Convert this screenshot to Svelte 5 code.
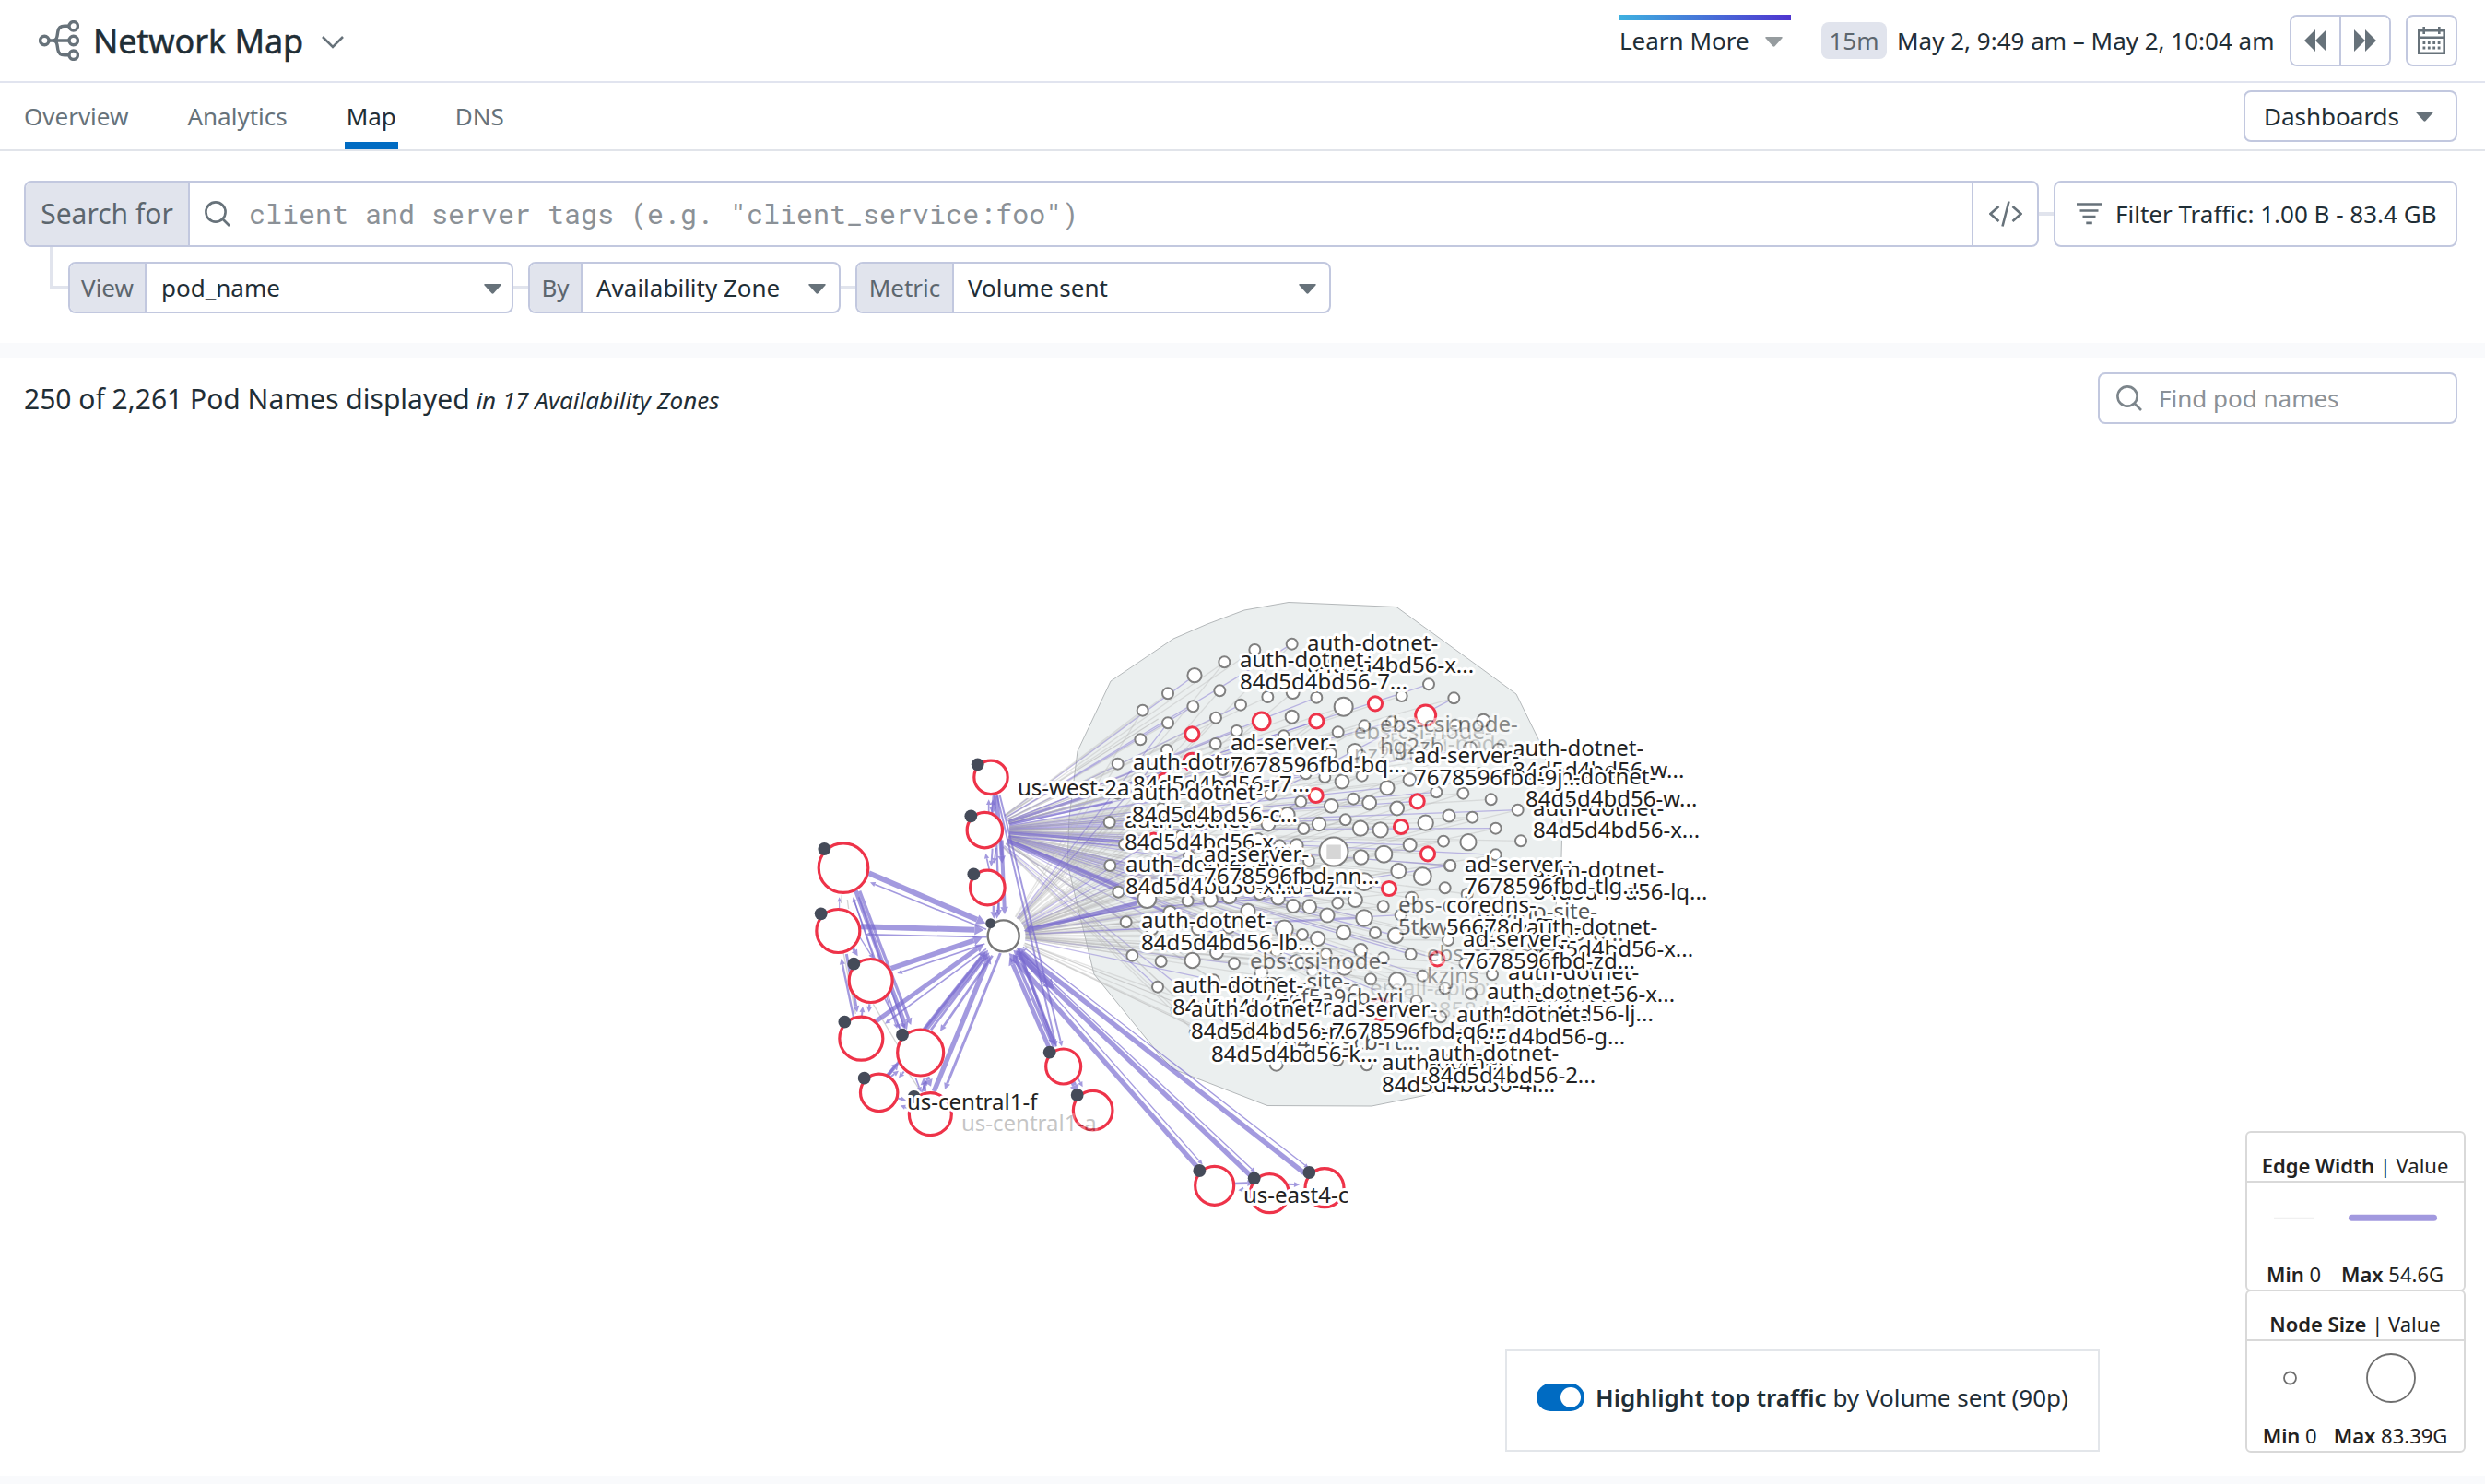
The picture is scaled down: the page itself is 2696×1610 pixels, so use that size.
<script>
  const INK = '#796bd0';
  const RED = '#ee3349';
  const GREY = '#808080';

  // Each tile stores its items in thirds of a pixel, relative to its own origin.
  const place = (ox, oy, list) =>
    list.map(([x, y, r = 6, tone = 0]) => ({ x: ox + x / 3, y: oy + y / 3, r, tone }));

  const hull =
    '1205,739 1273,693 1310,677 1350,662 1398,653.500 1515,658.500 1600,720 1645,753 1670,804 1690,862 1695,890 1694,930 1688,983 1672,1080 1610,1168 1543,1189 1488,1200 1375,1199.500 1273,1160 1260,1147 1187,1057 1158,937 1160,887 1169,815';

  const pods = [
    ...place(1150, 640, [
      [755, 176], [634, 195], [535, 235], [438, 278, 7.6], [520, 328], [351, 337], [269, 392], [433, 379],
      [351, 433], [262, 487], [188, 566], [588, 374], [507, 416], [676, 348], [758, 333, 7], [835, 350],
      [923, 380, 10], [656, 427, 9.4, 1], [835, 427, 7.6, 1], [1026, 370, 7.6, 1], [430, 469, 7.6, 1],
      [755, 413, 7], [575, 459], [506, 501], [348, 521], [905, 463], [728, 475], [1112, 345], [991, 442],
      [960, 525, 8], [880, 533, 6.5], [430, 560, 9.4, 1], [340, 620, 7.6, 1], [800, 598], [862, 609],
      [918, 624, 7.4], [983, 605], [1065, 644, 7.6], [1138, 618, 6.8], [833, 669, 7.6, 1], [784, 689],
      [883, 703, 7.4], [955, 680], [1007, 693, 7.4], [1097, 711, 7.4], [1163, 688, 7.6, 1], [843, 762, 7.2],
      [793, 777], [929, 748], [978, 776, 8.2], [1043, 781, 8.2], [1110, 771, 7.6, 1], [740, 732, 8],
      [678, 762, 7.4], [161, 756], [188, 662], [305, 815, 7.6, 1], [685, 665], [980, 870, 7.8],
      [1054, 860, 9], [1139, 830, 7], [770, 832, 7], [715, 832], [810, 882], [163, 897], [530, 585],
      [210, 828], [330, 712], [420, 865], [395, 800], [645, 810]
    ]),
    ...place(1500, 640, [
      [150, 307], [232, 352], [140, 408, 11, 1], [328, 425, 7], [175, 658], [262, 662], [353, 682],
      [440, 716], [216, 735, 6.6], [292, 740], [140, 758, 8.2], [368, 776], [450, 817], [198, 818],
      [279, 821, 8.6], [368, 862], [147, 859, 7.6, 1], [219, 897], [237, 440], [285, 515, 7], [378, 518],
      [315, 598], [30, 430]
    ]),
    ...place(1150, 920, [
      [190, 143], [283, 165, 10], [358, 210, 7], [215, 241], [235, 350], [329, 369], [431, 366, 8.2],
      [318, 452], [380, 528], [440, 600], [567, 376], [510, 340, 7], [416, 172], [490, 168, 7.6],
      [551, 158, 7.6], [710, 163, 7.2], [759, 189, 7], [812, 191, 7.4], [612, 205, 7.6], [730, 264, 9.4],
      [789, 282], [839, 295, 7.6], [870, 219, 7.6], [904, 179], [961, 169, 7.6], [923, 275, 7.6],
      [990, 228, 8.8], [1026, 276], [1052, 190], [1092, 285, 8.2], [979, 333, 7], [866, 345], [1052, 358],
      [1142, 346], [1097, 432, 8.8], [1011, 427], [960, 464], [1071, 132, 7.6, 1], [1102, 75, 8],
      [1180, 92, 9.4], [990, 110, 9.4], [650, 150], [1109, 218], [1145, 163, 6.6], [770, 372, 8],
      [655, 405, 7], [925, 388, 8.4], [822, 400], [704, 704, 7], [903, 691], [998, 706], [1042, 525, 11.5, 1],
      [1180, 416], [1160, 498], [300, 265], [450, 262, 7], [550, 260], [704, 335], [500, 430]
    ]),
    ...place(1500, 920, [
      [220, 57], [203, 130], [275, 150], [213, 300], [178, 361, 7.6, 1], [203, 457], [288, 474],
      [357, 412], [189, 550], [268, 375], [140, 275]
    ])
  ];

  const zones = [
    ...place(860, 780, [
      [645, 190, 18.2, 1], [625, 362, 19.2, 1], [634, 549, 18.8, 1], [165, 485, 26.8, 1], [148, 690, 23.5, 1],
      [254, 852, 23.5, 1], [223, 1040, 23.5, 1], [416, 1086, 25, 1], [281, 1216, 20.2, 1],
      [448, 1286, 23, 1], [881, 1131, 19, 1], [977, 1274, 21.3, 1], [686, 706, 17]
    ]),
    ...place(1260, 860, [[173, 1279, 21, 1], [352, 1304, 21, 1], [531, 1286, 21, 1]])
  ];

  const badges = [
    ...place(860, 780, [
      [602, 148, 6.9], [580, 316, 6.9], [589, 505, 6.9], [103, 423, 6.9], [92, 634, 6.9], [199, 797, 6.9],
      [169, 986, 6.9], [357, 1028, 6.9], [233, 1169, 6.9], [395, 1230, 6.9], [836, 1085, 6.9],
      [926, 1224, 6.9], [644, 665, 5.4]
    ]),
    ...place(1260, 860, [[124, 1230, 6.9], [302, 1255, 6.9], [481, 1236, 6.9]])
  ];

  // Straight arrows between zones: start, end, width.
  const arrows = [
    [248, 502, 628, 665, 18], [630, 685, 252, 532, 5],
    [222, 676, 622, 687, 18], [632, 710, 236, 701, 5],
    [320, 812, 617, 712, 17], [625, 732, 340, 828, 5],
    [270, 985, 622, 732, 15], [630, 748, 300, 992, 5],
    [430, 1012, 636, 752, 18], [650, 770, 480, 1016, 8], [450, 1012, 640, 760, 8],
    [310, 1160, 628, 758, 8],
    [460, 1212, 642, 768, 16], [676, 762, 495, 1206, 9],
    [655, 608, 655, 650, 10], [680, 395, 690, 636, 12], [658, 250, 672, 640, 7], [670, 600, 664, 650, 6],
    [640, 492, 628, 437, 5], [650, 422, 646, 480, 6], [638, 305, 638, 262, 5], [655, 248, 650, 310, 10],
    [664, 250, 682, 470, 12], [648, 305, 652, 262, 5], [662, 420, 655, 470, 5],
    [665, 248, 858, 1066, 6], [674, 248, 876, 1066, 6],
    [838, 1078, 706, 775, 14], [850, 1068, 718, 765, 10], [735, 748, 856, 1062, 7], [858, 1066, 728, 750, 6],
    [745, 775, 848, 1060, 8],
    [912, 1182, 928, 1218, 16], [926, 1165, 944, 1198, 5],
    [1320, 1462, 704, 762, 16], [735, 770, 1334, 1450, 4],
    [1490, 1486, 718, 752, 16], [745, 762, 1506, 1476, 4],
    [1665, 1478, 728, 745, 16], [750, 742, 1680, 1462, 4],
    [740, 760, 850, 880, 20],
    [205, 558, 372, 1012, 14], [218, 560, 385, 996, 10], [350, 1012, 196, 580, 5], [200, 590, 340, 1008, 4],
    [215, 580, 365, 1010, 5], [198, 970, 158, 780, 7], [175, 765, 210, 955, 9], [195, 745, 212, 772, 9],
    [152, 618, 152, 580, 3], [250, 928, 248, 955, 7], [225, 966, 228, 936, 6], [212, 700, 262, 780, 4],
    [300, 910, 350, 1010, 5], [305, 1165, 345, 1118, 12], [312, 1170, 345, 1145, 6], [362, 1148, 345, 1168, 6],
    [430, 1212, 426, 1168, 11], [438, 1166, 450, 1196, 14], [400, 1168, 418, 1215, 5], [420, 1214, 436, 1175, 6],
    [340, 1234, 370, 1242, 6], [376, 1268, 350, 1258, 5],
    [1438, 1512, 1500, 1510, 8], [1480, 1530, 1450, 1534, 6], [1610, 1514, 1650, 1516, 6],
    [1120, 600, 752, 690, 14], [1150, 608, 760, 682, 5]
  ].map(([x1, y1, x2, y2, w]) => {
    const len = Math.hypot(x2 - x1, y2 - y1);
    const ux = (x2 - x1) / len;
    const uy = (y2 - y1) / len;
    const head = Math.min(12 + w, len * 0.7);
    const half = 4.5 + w * 0.7;
    const bx = x2 - ux * head;
    const by = y2 - uy * head;
    return {
      x1, y1, w, x2: bx, y2: by,
      tip: `${x2},${y2} ${bx - uy * half},${by + ux * half} ${bx + uy * half},${by - ux * half}`
    };
  });

  const heavy = [
    [700, 395, 1060, 545, 12], [702, 402, 1232, 636, 8], [706, 372, 1110, 402, 9], [706, 342, 1040, 270, 7],
    [704, 382, 1260, 430, 5], [704, 332, 1000, 235, 4], [1750, 570, 1200, 610, 4], [1680, 820, 1230, 640, 4]
  ];
  const faint = [
    [160, 572, 158, 600], [178, 588, 182, 618], [262, 928, 342, 1062], [368, 1140, 410, 1202],
    [690, 315, 1190, 0], [700, 392, 1240, 900], [730, 650, 930, 420], [756, 730, 1240, 920], [756, 740, 1300, 1000],
    [165, 760, 205, 960]
  ];

  const fan = (cx, cy, gap, keep, purple) =>
    pods.filter((_, i) => keep(i)).map((p, i) => {
      const d = Math.hypot(p.x - cx, p.y - cy);
      return {
        x1: cx + ((p.x - cx) / d) * gap,
        y1: cy + ((p.y - cy) / d) * gap,
        x2: p.x, y2: p.y, purple: purple(i)
      };
    });
  const traffic = [
    ...fan(1068.5, 900.6, 27, (i) => i % 5 !== 4, (i) => i % 3 === 0),
    ...fan(1088.7, 1015, 24, (i) => i % 2 === 0, (i) => i % 8 === 4)
  ];

  const AUTH = 'auth-dotnet-';
  const AD = 'ad-server-';
  const A = '84d5d4bd56-';
  const B = '7678596fbd-';
  // x, first baseline, first line, second line, opacity
  const labels = [
    [1419, 706, AUTH, A + 'x...'], [1346, 724, AUTH, A + '7...'],
    [1495, 815, 'ebs-csi-node-', '', 0.22], [1470, 802, 'ebs-csi-node-', 'pz2wt', 0.32],
    [1498, 794, 'ebs-csi-node-', 'hg2zb', 0.5],
    [1282, 946, AD, B + 'dz...'], [1222, 946, AUTH, A + 'x...'], [1221, 898, AUTH, A + 'x...'],
    [1307, 935, AD, B + 'nn...'], [1230, 835, AUTH, A + 'r7...'], [1229, 868, AUTH, A + 'c...'],
    [1336, 814, AD, B + 'bq...'],
    [1664, 885, AUTH, A + 'x...'], [1642, 820, AUTH, A + 'w...'], [1656, 851, AUTH, A + 'w...'],
    [1535, 828, AD, B + '9j...'],
    [1664, 952, AUTH, A + 'lq...'], [1590, 946, AD, B + 'tlg...'],
    [1603, 997, 'promo-site-', '7d9c8b6f5-g...', 0.75], [1518, 990, 'ebs-csi-node-', '5tkwz', 0.65],
    [1570, 990, 'coredns-', '56678dcf76-...'], [1657, 1014, AUTH, A + 'x...'],
    [1487, 1080, 'email-api-py-', '6f7c93858d-...', 0.18], [1549, 1043, 'ebs-csi-node-', 'kzjns', 0.42],
    [1637, 1063, AUTH, A + 'x...'], [1588, 1027, AD, B + 'zd...'], [1614, 1084, AUTH, A + 'lj...'],
    [1581, 1109, AUTH, A + 'g...'],
    [1239, 1007, AUTH, A + 'lb...'], [1335, 1073, 'promo-site-', '', 0.75],
    [1357, 1051, 'ebs-csi-node-', '', 0.6], [1370, 1090, '7d4f5a9cb-vrj', '', 0.75],
    [1380, 1139, '7d4f5c9cb-rt...', '', 0.75],
    [1273, 1077, AUTH, A + '7r...'], [1315, 1128, AUTH, A + 'k...'], [1293, 1103, AUTH, A + 'r...'],
    [1446, 1103, AD, B + 'q6...'], [1500, 1161, AUTH, A + '4r...'], [1550, 1151, AUTH, A + '2...'],
    [1105, 862.5, 'us-west-2a', ''], [1044, 1227, 'us-central1-a', '', 0.26],
    [985, 1203.5, 'us-central1-f', ''], [1350, 1304.5, 'us-east4-c', '']
  ].map(([x, y, one, two, alpha = 1]) => ({ x: x - 1, y: y + 0.3, one, two, alpha }));

  const tabs = ['Overview', 'Analytics', 'Map', 'DNS'];
  const selects = [
    { tag: 'View', value: 'pod_name', cls: 'view' },
    { tag: 'By', value: 'Availability Zone', cls: 'by' },
    { tag: 'Metric', value: 'Volume sent', cls: 'metric' }
  ];
</script>

{#snippet caret()}
  <svg class="caret" width="19" height="11" viewBox="0 0 19 11"><path d="M1 0h17q1.200.4.400 1.400L10.500 10.200q-1 .9-2 0L.6 1.400Q-.2.400 1 0z" fill="currentColor" /></svg>
{/snippet}

{#snippet glass()}
  <svg class="glass" width="28" height="28" viewBox="0 0 28 28" fill="none" stroke="currentColor" stroke-width="2.600"><circle cx="12" cy="12" r="10.600" /><path d="M19.500 19.500l7.500 7.500" /></svg>
{/snippet}

<div class="page">
  <header class="top">
    <svg class="logo" width="44" height="44" viewBox="0 0 44 44" fill="none" stroke="currentColor" stroke-width="3.400">
      <circle cx="6.300" cy="22" r="4.700" /><circle cx="37.700" cy="6.300" r="4.700" />
      <circle cx="37.700" cy="22" r="4.700" /><circle cx="37.700" cy="37.700" r="4.700" />
      <path d="M11 22H33M33 6.300H28c-4 0-6.600 2-7.200 6l-.8 5c-.5 3-1.500 4.700-4.500 4.700c3 0 4 1.700 4.500 4.700l.8 5c.6 4 3.200 6 7.200 6H33" />
    </svg>
    <h1>Network Map</h1>
    <svg class="chev" width="24" height="14" viewBox="0 0 24 14" fill="none" stroke="currentColor" stroke-width="2.600"><path d="M1 1l11 11L23 1" /></svg>
    <div class="learn"><span>Learn More</span>{@render caret()}</div>
    <span class="pill">15m</span>
    <span class="range">May 2, 9:49 am – May 2, 10:04 am</span>
    <div class="pair">
      <button aria-label="Back"><svg width="24" height="24" viewBox="0 0 24 24" fill="currentColor"><path d="M12 0v24L0 12zM24 0v24L12 12z" /></svg></button>
      <button aria-label="Forward"><svg width="24" height="24" viewBox="0 0 24 24" fill="currentColor"><path d="M0 0v24l12-12zM12 0v24l12-12z" /></svg></button>
    </div>
    <button class="cal" aria-label="Calendar">
      <svg width="32" height="32" viewBox="0 0 32 32" fill="none" stroke="currentColor" stroke-width="2.600">
        <path d="M2.300 5.300h27.400v24.400H2.300zM2.300 12.700h27.400M7.700 1v8M24.300 1v8" />
        <path d="M6.500 18.500h19M6.500 24h19" stroke-width="2.800" stroke-dasharray="2.800 2.600" />
      </svg>
    </button>
  </header>

  <nav class="tabs">
    {#each tabs as t}<a href="#{t}" class:active={t === 'Map'}>{t}</a>{/each}
    <button class="dash">Dashboards {@render caret()}</button>
  </nav>

  <section class="query">
    <div class="row">
      <div class="search">
        <span class="tag big">Search for</span>
        <div class="field">{@render glass()}<span class="mono">client and server tags (e.g. "client_service:foo")</span></div>
        <div class="code"><svg width="36" height="28" viewBox="0 0 36 28" fill="none" stroke="currentColor" stroke-width="2.600"><path d="M10.500 6l-9 8 9 8M21.500.5l-7 27M25.500 6l9 8-9 8" /></svg></div>
      </div>
      <i class="link"></i>
      <div class="filter">
        <svg width="27" height="24" viewBox="0 0 27 24" stroke="currentColor" stroke-width="2.700"><path d="M0 1.500h27M3.500 8.500h20M6.500 15h14M10.300 21.800h6.500" /></svg>
        <span>Filter Traffic: 1.00 B - 83.4 GB</span>
      </div>
    </div>
    <div class="sub">
      <i class="elbow"></i>
      {#each selects as s, i}
        {#if i > 0}<i class="link"></i>{/if}
        <div class="select {s.cls}"><span class="tag">{s.tag}</span><span class="val">{s.value}</span>{@render caret()}</div>
      {/each}
    </div>
  </section>

  <section class="map">
    <div class="head">
      <p>250 of 2,261 Pod Names displayed <em>in 17 Availability Zones</em></p>
      <div class="find">{@render glass()}<span>Find pod names</span></div>
    </div>

    <svg class="canvas" width="2696" height="1213" viewBox="0 388 2696 1213">
      <polygon points={hull} fill="#ebefef" stroke="#b4b8ba" stroke-width="1" />
      {#each traffic as l}
        <line x1={l.x1} y1={l.y1} x2={l.x2} y2={l.y2} stroke={l.purple ? INK : '#b4b4b4'} stroke-opacity={l.purple ? 0.45 : 0.36} stroke-width="1.300" />
      {/each}
      <g transform="translate(860 780) scale(.33333)">
        {#each faint as [x1, y1, x2, y2]}
          <line {x1} {y1} {x2} {y2} stroke="#b8b8b8" stroke-opacity=".6" stroke-width="4" />
        {/each}
        {#each heavy as [x1, y1, x2, y2, w]}
          <line {x1} {y1} {x2} {y2} stroke={INK} stroke-opacity=".65" stroke-width={w} />
        {/each}
        {#each arrows as a}
          <g opacity=".68">
            <line x1={a.x1} y1={a.y1} x2={a.x2} y2={a.y2} stroke={INK} stroke-width={a.w} />
            <polygon points={a.tip} fill={INK} />
          </g>
        {/each}
      </g>
      {#each pods as p}
        <circle cx={p.x} cy={p.y} r={p.r} fill="#fff" stroke={p.tone ? RED : GREY} stroke-width={p.tone ? 3 : 2} />
      {/each}
      <circle cx="1447" cy="924" r="15.500" fill="#fff" stroke={GREY} stroke-width="2" />
      <rect x="1439.300" y="916.500" width="15.500" height="15.500" fill="#d6d6d6" />
      {#each zones as z}
        <circle cx={z.x} cy={z.y} r={z.r} fill="#fff" stroke={z.tone ? RED : '#777'} stroke-width={z.tone ? 3.2 : 2.4} />
      {/each}
      {#each badges as b}<circle cx={b.x} cy={b.y} r={b.r} fill="#454b59" />{/each}
      {#each labels as l}
        <text class="label" opacity={l.alpha}><tspan x={l.x} y={l.y}>{l.one}</tspan><tspan x={l.x} y={l.y + 24}>{l.two}</tspan></text>
      {/each}
    </svg>

    <div class="toggle-card">
      <span class="switch"></span>
      <span><b>Highlight top traffic</b> by Volume sent (90p)</span>
    </div>

    <div class="legend">
      <div class="block edge">
        <h4><b>Edge Width</b> | Value</h4>
        <svg width="236" height="88" viewBox="2438 1284 236 88"><path d="M2467 1322.500h43" stroke="#f0f0f0" stroke-width="1.500" /><path d="M2551.500 1322.300h89" stroke="#a299df" stroke-width="7" stroke-linecap="round" /></svg>
        <p><span><b>Min</b> 0</span><span><b>Max</b> 54.6G</span></p>
      </div>
      <div class="block node">
        <h4><b>Node Size</b> | Value</h4>
        <svg width="236" height="88" viewBox="2438 1456 236 88" fill="none" stroke="#6e6e6e" stroke-width="1.800"><circle cx="2484.500" cy="1496" r="6.500" /><circle cx="2594" cy="1496" r="26" /></svg>
        <p><span><b>Min</b> 0</span><span><b>Max</b> 83.39G</span></p>
      </div>
    </div>
  </section>
</div>

<style>
  :global(body) { background: #fff; }
  .page, .page * { box-sizing: border-box; }
  .page {
    width: 2696px; height: 1610px; overflow: hidden; display: flex; flex-direction: column;
    font: 26px 'Noto Sans', 'Open Sans', sans-serif; color: #1f2e36; background: #f9fafc;
  }
  svg { display: block; flex: none; }
  button { font: inherit; color: inherit; background: #fff; padding: 0; margin: 0; }
  .caret, .glass, .logo, .chev { color: #67727a; }
  .top { height: 90px; border-bottom: 2px solid #e1e4ef; background: #fff; display: flex; align-items: center; padding: 0 30px 0 42px; }
  h1 { margin: 0 0 0 15px; font-size: 36px; font-weight: 400; width: 233px; white-space: nowrap; -webkit-text-stroke: .5px currentColor; letter-spacing: -.1px; }
  .chev { margin-left: 15px; margin-top: 3px; }
  .learn { margin-left: auto; position: relative; width: 187px; height: 88px; display: flex; align-items: center; justify-content: space-between; padding: 0 9px 0 1px; white-space: nowrap; }
  .learn::before { content: ''; position: absolute; left: 0; top: 16px; width: 187px; height: 6px; background: linear-gradient(90deg, #3eb1e0, #4f35d0); }
  .learn .caret { color: #969c9f; margin-top: 2px; }
  .pill { margin-left: 33px; width: 71px; height: 40px; border-radius: 8px; background: #e1e4ed; color: #5c666e; display: flex; align-items: center; justify-content: center; }
  .range { margin-left: 11px; width: 426px; white-space: nowrap; }
  .pair { width: 110px; height: 56px; border: 2px solid #c2c8df; border-radius: 8px; display: flex; overflow: hidden; }
  .pair button { flex: 1; border: 0; display: grid; place-items: center; color: #67727a; }
  .pair button + button { border-left: 2px solid #c2c8df; }
  .cal { margin-left: 16px; width: 56px; height: 56px; border: 2px solid #c2c8df; border-radius: 8px; display: grid; place-items: center; color: #67727a; }
  .tabs { height: 74px; border-bottom: 2px solid #e1e4ea; background: #fff; display: flex; align-items: center; padding: 0 30px 0 24px; }
  .tabs a { height: 72px; display: flex; align-items: center; color: #66727a; text-decoration: none; padding: 0 2px; margin-right: 60px; border-bottom: 8px solid transparent; border-top: 8px solid transparent; }
  .tabs a.active { color: #1f2e36; border-bottom-color: #006bc2; }
  .dash { margin-left: auto; width: 232px; height: 56px; border: 2px solid #c2c8df; border-radius: 8px; display: flex; align-items: center; justify-content: space-between; padding: 0 24px 0 20px; }
  .dash .caret { margin-top: 1px; }
  .query { height: 208px; padding: 32px 30px 0 26px; background: #fff; }
  .row { display: flex; align-items: center; height: 72px; }
  .search { flex: 1; height: 72px; border: 2px solid #c2c8df; border-radius: 8px; display: flex; overflow: hidden; }
  .tag { background: #e1e4ed; color: #5c666e; border-right: 2px solid #c2c8df; display: flex; align-items: center; justify-content: center; }
  .tag.big { width: 178px; font-size: 30px; padding-bottom: 1px; }
  .field { flex: 1; display: flex; align-items: center; gap: 20px; padding-left: 16px; }
  .mono { font: 30px 'Roboto Mono', 'Liberation Mono', monospace; color: #8b9197; white-space: pre; padding-bottom: 1px; }
  .code { width: 71px; border-left: 2px solid #c2c8df; display: grid; place-items: center; color: #67727a; }
  .link { width: 16px; height: 4px; background: #e1e4ed; }
  .filter { width: 438px; height: 72px; border: 2px solid #c2c8df; border-radius: 8px; display: flex; align-items: center; gap: 15px; padding-left: 23px; white-space: nowrap; }
  .filter svg { color: #67727a; }
  .sub { display: flex; align-items: center; margin-top: 16px; height: 56px; }
  .elbow { width: 20px; height: 46px; margin: -16px 0 0 28px; align-self: flex-start; border: solid #e1e4ed; border-width: 0 0 4px 4px; }
  .select { height: 56px; border: 2px solid #c2c8df; border-radius: 8px; display: flex; align-items: stretch; overflow: hidden; }
  .view { width: 483px; } .by { width: 339px; } .metric { width: 516px; }
  .view .tag { width: 83px; } .by .tag { width: 57px; } .metric .tag { width: 105px; }
  .val { flex: 1; padding-left: 16px; display: flex; align-items: center; white-space: nowrap; }
  .by .val { padding-left: 15px; }
  .metric .val { padding-left: 15px; }
  .select .caret { align-self: center; margin-right: 11px; margin-top: 2px; }
  .by .caret { margin-right: 14px; }
  .metric .caret { margin-right: 14px; }
  .map { position: relative; margin-top: 16px; height: 1213px; background: #fff; }
  .head { display: flex; align-items: center; justify-content: space-between; padding: 16px 30px 0 26px; height: 72px; position: relative; z-index: 1; }
  .head p { margin: 0; font-size: 30px; white-space: nowrap; }
  .head em { font-size: 26px; margin-left: -1px; }
  .find { width: 390px; height: 56px; border: 2px solid #c2c8df; border-radius: 8px; display: flex; align-items: center; gap: 18px; padding-left: 18px; color: #8b9197; }
  .find .glass { color: #7c858b; }
  .canvas { position: absolute; left: 0; top: 0; }
  .label { font: 24px 'Noto Sans', sans-serif; fill: #222; stroke: #fff; stroke-width: 6px; stroke-linejoin: round; paint-order: stroke; }
  .toggle-card { position: absolute; left: 1633px; top: 1076px; width: 645px; height: 111px; border: 2px solid #e3e6ea; background: #fff; display: flex; align-items: center; padding: 0 0 7px 32px; gap: 12px; white-space: nowrap; }
  .toggle-card b { font-weight: 600; }
  .switch { width: 52px; height: 30px; border-radius: 15px; background: #006bc2; display: flex; justify-content: flex-end; align-items: center; padding-right: 4px; }
  .switch::after { content: ''; width: 22px; height: 22px; border-radius: 50%; background: #fff; }
  .legend { position: absolute; left: 2436px; top: 839px; width: 239px; font-size: 22px; color: #222; }
  .block { border: 2px solid #d9d9d9; border-radius: 6px; background: #fff; }
  .edge { height: 174px; } .node { height: 177px; margin-top: -2px; }
  .block h4 { margin: 0; height: 54px; border-bottom: 2px solid #d9d9d9; font-weight: 400; font-size: 22px; line-height: 30px; padding: 20px 1px 0 0; text-align: center; white-space: nowrap; }
  .block b { font-weight: 600; }
  .block p { margin: -3px 0 0; padding-right: 1px; display: flex; justify-content: center; gap: 22px; line-height: 30px; white-space: nowrap; }
  .edge p { margin-top: -4px; }
  .node p { gap: 18px; margin-top: -1px; }
</style>
